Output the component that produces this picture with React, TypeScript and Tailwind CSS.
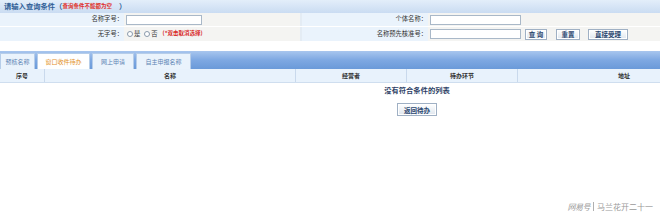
const font = "font-['Noto_Sans_CJK_SC','Noto_Sans',sans-serif]";

function Btn({ children, className = '' }: { children: React.ReactNode; className?: string }) {
  return (
    <span
      className={`inline-flex h-[11px] items-center justify-center border border-[#9fb0c4] bg-gradient-to-b from-[#ffffff] to-[#dfe6ee] text-[6.5px] font-bold text-[#2c4870] shadow-[inset_0_0_0_1px_#fff] ${className}`}
    >
      {children}
    </span>
  );
}

export default function App() {
  const tabs = [
    { label: '预核名称', w: 'w-[35px]', active: false },
    { label: '窗口收件待办', w: 'w-[53px]', active: true },
    { label: '网上申请', w: 'w-[42px]', active: false },
    { label: '自主申报名称', w: 'w-[55px]', active: false },
  ];

  return (
    <div className={`relative h-[214px] w-[660px] overflow-hidden bg-white ${font} leading-none`}>
      {/* 查询条件 */}
      <div className="flex h-[13px] items-center bg-gradient-to-b from-[#e3eefa] to-[#cadcf2] pl-[4px]">
        <span className="text-[7.3px] font-bold text-[#2f5e96]">请输入查询条件（</span>
        <span className="text-[5.5px] font-bold text-[#e0302a]">查询条件不能都为空</span>
        <span className="ml-[7px] text-[7.3px] font-bold text-[#2f5e96]">）</span>
      </div>

      <div className="flex h-[14px] border-b border-white text-[6.3px] text-[#333]">
        <div className="flex w-[124px] items-center justify-end bg-[#eaf3fc] pr-[1px]">名称字号：</div>
        <div className="flex w-[176px] items-center bg-[#f4f4f2] pl-[2px]">
          <span className="h-[10px] w-[76px] border border-[#a9b8c8] bg-white" />
        </div>
        <div className="w-[2px] bg-[#e4ecf4]" />
        <div className="flex w-[126px] items-center justify-end bg-[#eaf3fc] pr-[1px]">个体名称：</div>
        <div className="flex flex-1 items-center bg-[#f4f4f2] pl-[2px]">
          <span className="h-[10px] w-[91px] border border-[#a9b8c8] bg-white" />
        </div>
      </div>

      <div className="flex h-[14px] text-[6.3px] text-[#333]">
        <div className="flex w-[124px] items-center justify-end bg-[#eaf3fc] pr-[1px]">无字号：</div>
        <div className="flex w-[176px] items-center gap-[1px] bg-[#f4f4f2] pl-[3px]">
          <span className="h-[6px] w-[6px] rounded-full border border-[#8a9aab] bg-white" />
          <span className="mr-[3px]">是</span>
          <span className="h-[6px] w-[6px] rounded-full border border-[#8a9aab] bg-white" />
          <span>否</span>
          <span className="ml-[4px] text-[5.5px] font-bold text-[#d8261e]">(*双击取消选择)</span>
        </div>
        <div className="w-[2px] bg-[#e4ecf4]" />
        <div className="flex w-[126px] items-center justify-end bg-[#eaf3fc] pr-[1px]">名称预先核准号：</div>
        <div className="flex flex-1 items-center bg-[#f4f4f2] pl-[2px]">
          <span className="h-[10px] w-[91px] border border-[#a9b8c8] bg-white" />
          <Btn className="ml-[4px] w-[22px]">查 询</Btn>
          <Btn className="ml-[9px] w-[24px]">重置</Btn>
          <Btn className="ml-[8px] w-[40px]">直接受理</Btn>
        </div>
      </div>

      {/* 标签页 */}
      <div className="mt-[10px] flex h-[18px] items-end gap-[2px] bg-gradient-to-b from-[#a8c6ee] via-[#7ea8e2] to-[#6a9ad9] pt-[2px]">
        {tabs.map((t) => (
          <div
            key={t.label}
            className={`flex h-[16px] ${t.w} items-center justify-center border border-b-0 border-[#b6cde9] text-[6px] ${
              t.active ? 'bg-white text-[#e3901f]' : 'bg-[#eaf3fc] text-[#5d84b4]'
            }`}
          >
            {t.label}
          </div>
        ))}
      </div>

      {/* 表头 */}
      <div className="flex h-[14px] border-b border-[#cfdeef] bg-[#e8f2fc] text-[6px] font-bold text-[#333]">
        <div className="flex w-[45px] items-center justify-center border-r border-[#c9d9ec]">序号</div>
        <div className="flex w-[251px] items-center justify-center border-r border-[#c9d9ec]">名称</div>
        <div className="flex w-[111px] items-center justify-center border-r border-[#c9d9ec]">经营者</div>
        <div className="flex w-[111px] items-center justify-center border-r border-[#c9d9ec]">待办环节</div>
        <div className="flex flex-1 items-center justify-center pl-[70px]">地址</div>
      </div>

      {/* 空列表 */}
      <div className="flex w-[834px] flex-col items-center pt-[4px]">
        <span className="text-[7.3px] font-bold text-[#2e3f66]">没有符合条件的列表</span>
        <Btn className="mt-[9px] h-[13px] w-[40px]">返回待办</Btn>
      </div>

      {/* 水印 */}
      <div className="absolute bottom-[3px] right-[7px] flex items-center text-[8px] text-[#9a9a9a]">
        <span className="italic tracking-[-0.5px]">网易号</span>
        <span className="mx-[3px] h-[9px] w-px bg-[#b0b0b0]" />
        <span>马兰花开二十一</span>
      </div>
    </div>
  );
}
